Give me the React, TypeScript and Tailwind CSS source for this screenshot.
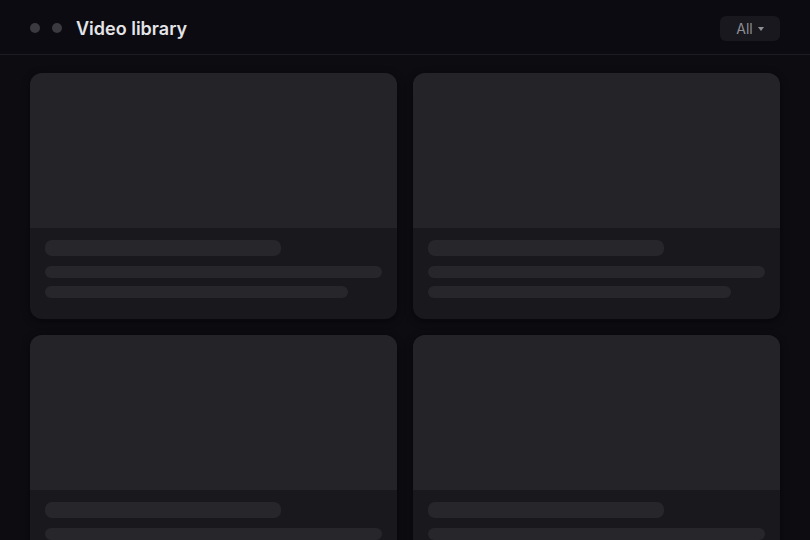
import React from "react";

function SkeletonCard() {
  return (
    <div className="rounded-[12px] overflow-hidden bg-[#18181d] shadow-[0_2px_8px_rgba(0,0,0,0.4)]">
      <div className="h-[155px] bg-[#232328]" />
      <div className="px-[15px] pt-[12px] pb-[21px]">
        <div className="h-[16px] w-[70%] rounded-[7px] bg-[#26262b]" />
        <div className="mt-[10px] h-[12px] w-full rounded-full bg-[#26262b]" />
        <div className="mt-[8px] h-[12px] w-[90%] rounded-full bg-[#26262b]" />
      </div>
    </div>
  );
}

export default function App() {
  return (
    <div
      className="w-[810px] h-[540px] overflow-hidden bg-[#0c0c11] text-[#e6e6ea]"
      style={{ fontFamily: "Inter, 'Noto Sans', sans-serif" }}
    >
      <header className="h-[55px] pt-[2px] flex items-center justify-between pl-[30px] pr-[30px] border-b border-[#1c1c22] bg-[#0b0b11]">
        <div className="flex items-center">
          <span className="w-[10px] h-[10px] rounded-full bg-[#3a3a40]" />
          <span className="ml-[12px] w-[10px] h-[10px] rounded-full bg-[#3a3a40]" />
          <h1 className="ml-[14px] text-[18px] font-semibold tracking-[0px] text-[#e4e4e8]">
            Video library
          </h1>
        </div>
        <button className="h-[25px] w-[60px] flex items-center justify-center gap-[5px] rounded-[6px] bg-[#18181e] text-[14px] text-[#8e8e95]">
          <span>All</span>
          <span className="mt-[2px] w-0 h-0 border-l-[3px] border-r-[3px] border-t-[4px] border-l-transparent border-r-transparent border-t-[#8e8e95]" />
        </button>
      </header>
      <main className="px-[30px] pt-[18px] grid grid-cols-2 gap-x-[16px] gap-y-[16px]">
        <SkeletonCard />
        <SkeletonCard />
        <SkeletonCard />
        <SkeletonCard />
      </main>
    </div>
  );
}
